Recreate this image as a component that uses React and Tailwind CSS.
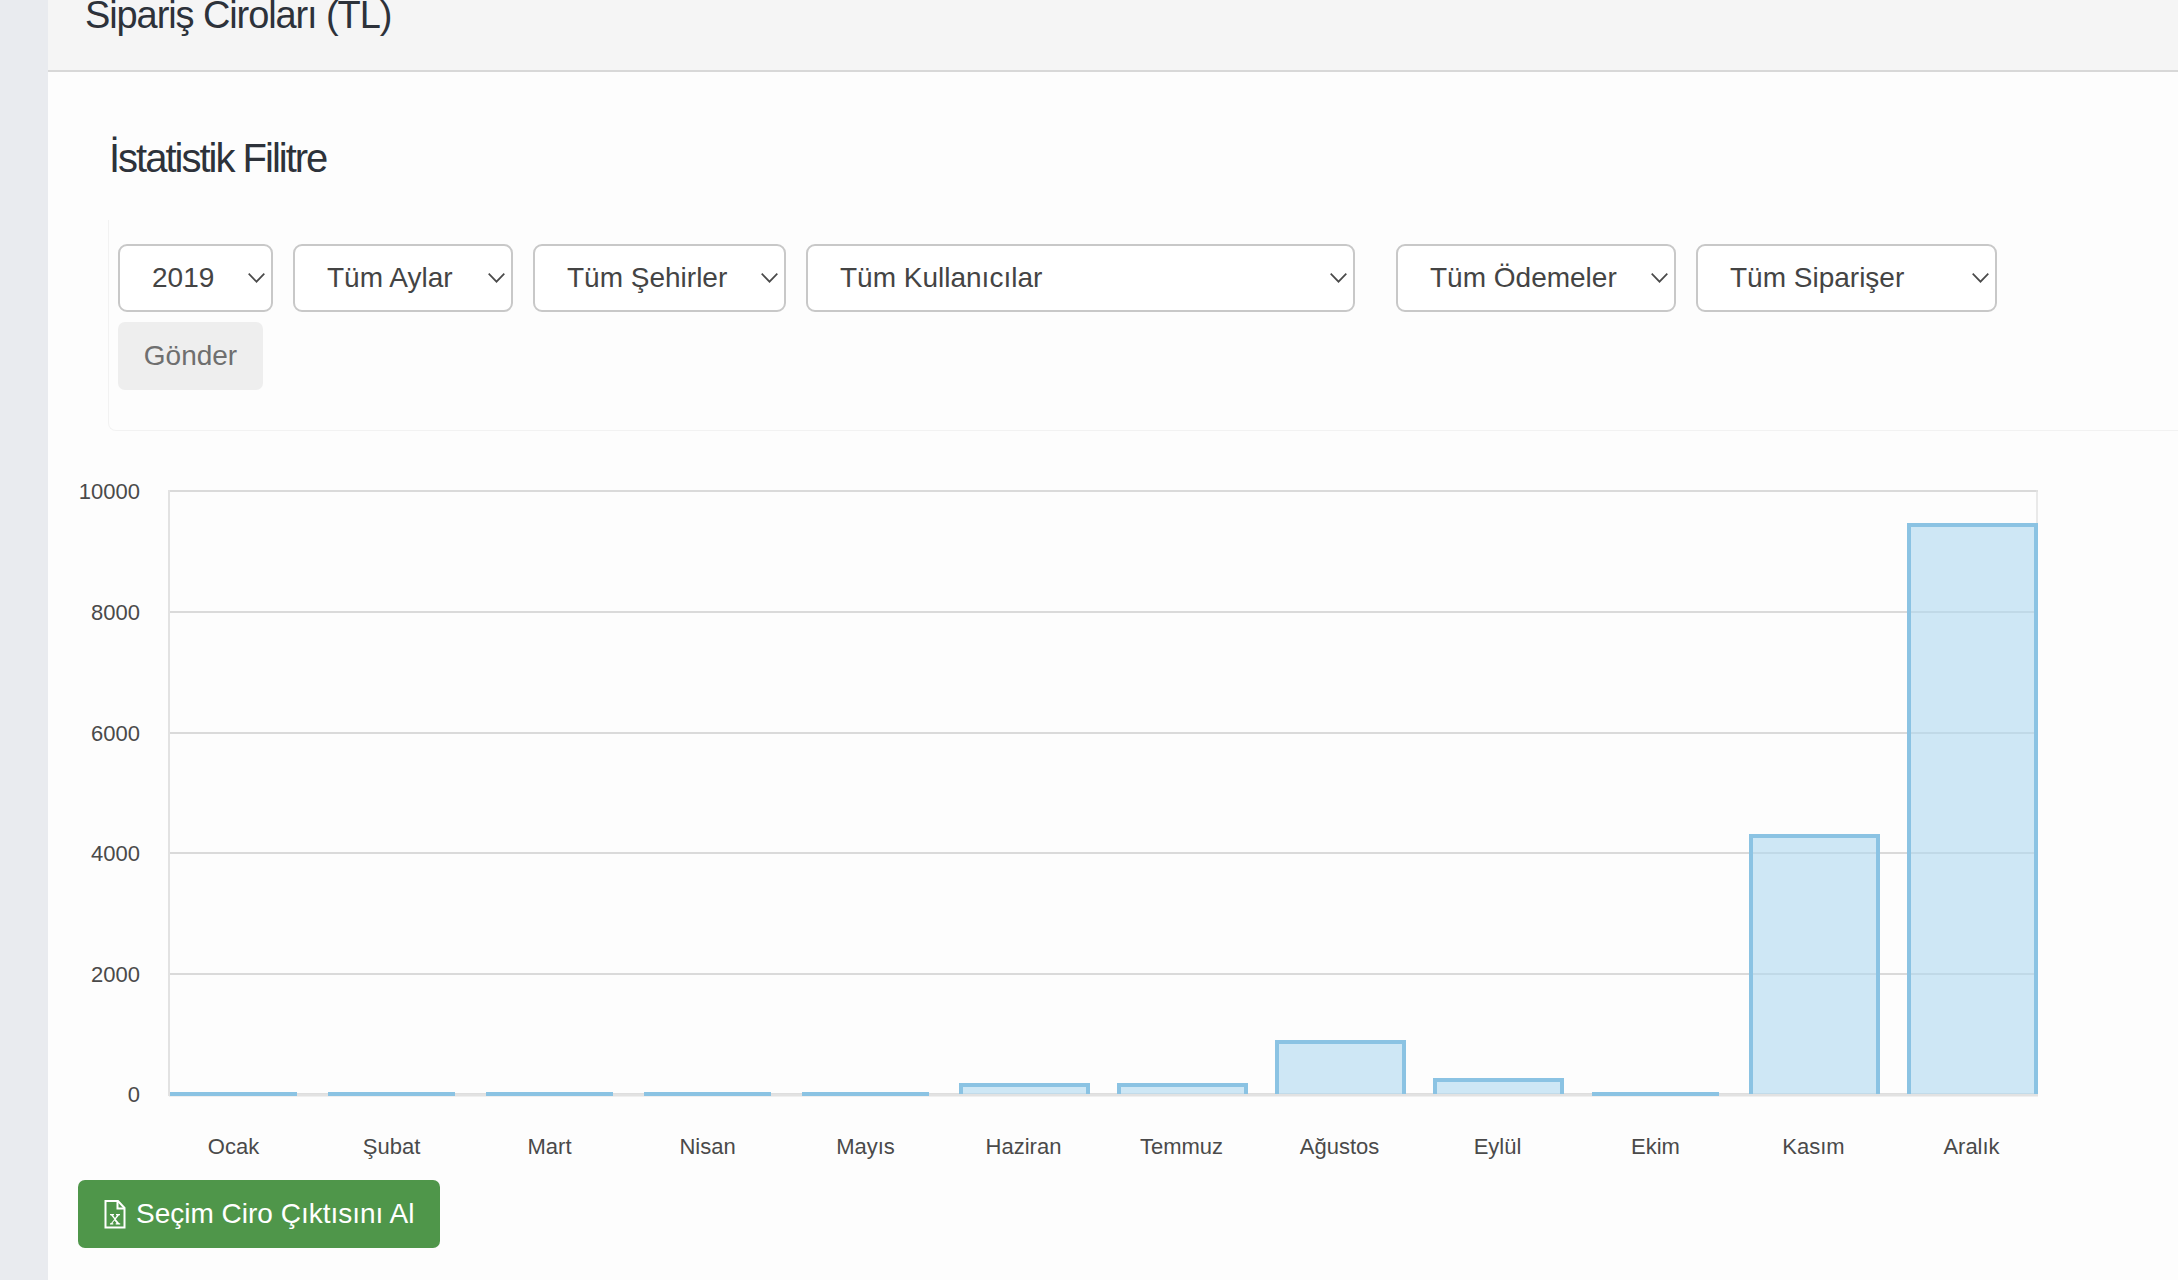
const FONT = { fontFamily: '"Liberation Sans", Arial, sans-serif' };

const months = [
  ["Ocak", 1092],
  ["Şubat", 1092],
  ["Mart", 1092],
  ["Nisan", 1092],
  ["Mayıs", 1092],
  ["Haziran", 1083],
  ["Temmuz", 1083],
  ["Ağustos", 1040],
  ["Eylül", 1078],
  ["Ekim", 1092],
  ["Kasım", 834],
  ["Aralık", 523],
];

const grid = [
  [10000, 491],
  [8000, 612],
  [6000, 733],
  [4000, 853],
  [2000, 974],
  [0, 1094],
];

const Chevron = () => (
  <svg width="17" height="10" viewBox="0 0 17 10" fill="none" stroke="#4a4a4a" strokeWidth="1.7">
    <path d="M.7.7l7.800 8L16.300.7" />
  </svg>
);

const Select = ({ label, className }) => (
  <div
    className={`flex h-[68px] items-center justify-between rounded-[9px] border-2 border-[#c8c8c8] bg-white pl-[32px] pr-[6px] text-[28px] text-[#444] ${className}`}
  >
    <span>{label}</span>
    <Chevron />
  </div>
);

const ExcelIcon = () => (
  <svg width="22" height="30" viewBox="0 0 22 30" fill="none" className="shrink-0">
    <path d="M1.500 2h12.500l6.500 7v19.500h-19z" stroke="white" strokeWidth="2" />
    <path d="M13.500 2v7.500h7" stroke="white" strokeWidth="2" />
    <path d="M6 15h4v1.200H9l2 2.800 2-2.800h-1V15h4v1.200h-1l-3.200 4 3.400 4h1v1.300h-4.500v-1.300h1l-2.200-2.800-2.200 2.800h1v1.300H6v-1.300h1l3.300-4-3.300-4H6z" fill="white" />
  </svg>
);

const Chart = () => (
  <svg width="2130" height="700" viewBox="48 470 2130 700" className="block">
    {grid.map(([value, y]) => (
      <g key={value}>
        <line x1="169" x2="2038" y1={y} y2={y} stroke="#dadada" strokeWidth="2" />
        <text x="140" y={y + 8} textAnchor="end" fontSize="22" fill="#4a4a4a">
          {value}
        </text>
      </g>
    ))}
    <line x1="169" x2="169" y1="490" y2="1096" stroke="#e2e2e2" strokeWidth="2" />
    <line x1="2037" x2="2037" y1="490" y2="1096" stroke="#e2e2e2" strokeWidth="1.5" />
    <line x1="169" x2="2038" y1="1095" y2="1095" stroke="#e2e2e2" strokeWidth="3" />
    {months.map(([name, top], i) => {
      const empty = top === 1092;
      const x = 170 + i * 158 - (empty ? 0 : 1);
      const width = empty ? 127 : 131;
      return (
        <g key={name}>
          {empty ? (
            <rect x={x} y="1092" width={width} height="4" fill="#8bc3e3" />
          ) : (
            <path
              d={`M${x + 2} 1094V${top + 2}H${x + width - 2}V1094`}
              fill="#afd8f0"
              fillOpacity="0.6"
              stroke="#8bc3e3"
              strokeWidth="4"
            />
          )}
          <text x={170 + i * 158 + 63.500} y="1154" textAnchor="middle" fontSize="22" fill="#4a4a4a">
            {name}
          </text>
        </g>
      );
    })}
  </svg>
);

export default function App() {
  return (
    <div style={FONT} className="flex h-[1280px] overflow-hidden bg-[#e9ebef]">
      <div className="w-[48px] shrink-0" />
      <main className="min-w-0 flex-1 bg-[#fdfdfd]">
        <header className="h-[72px] overflow-hidden border-b-2 border-[#d8d8d8] bg-[#f5f5f5] pl-[37px]">
          <h1 className="-mt-[5px] text-[38px] leading-[40px] tracking-[-1.1px] text-[#2d323a]">
            Sipariş Ciroları (TL)
          </h1>
        </header>

        <h2 className="ml-[61px] mt-[63px] text-[40px] leading-[46px] tracking-[-2px] text-[#2d323a]">
          İstatistik Filitre
        </h2>

        <section className="ml-[60px] mt-[39px] h-[211px] rounded-bl-[8px] border-b border-l border-[#f2f2f2] pl-[9px] pt-[24px]">
          <div className="flex gap-[20px]">
            <Select label="2019" className="w-[155px]" />
            <Select label="Tüm Aylar" className="w-[220px]" />
            <Select label="Tüm Şehirler" className="w-[253px]" />
            <Select label="Tüm Kullanıcılar" className="w-[549px]" />
            <Select label="Tüm Ödemeler" className="ml-[21px] w-[280px]" />
            <Select label="Tüm Siparişer" className="w-[301px]" />
          </div>
          <button className="mt-[10px] h-[68px] w-[145px] rounded-[7px] bg-[#eeeeee] text-[28px] text-[#6f6f6f]">
            Gönder
          </button>
        </section>

        <div className="mt-[39px]">
          <Chart />
        </div>

        <button className="ml-[30px] mt-[10px] flex h-[68px] w-[362px] items-center gap-[10px] rounded-[7px] bg-[#4f964a] pl-[26px] text-[28px] text-white">
          <ExcelIcon />
          Seçim Ciro Çıktısını Al
        </button>
      </main>
    </div>
  );
}
